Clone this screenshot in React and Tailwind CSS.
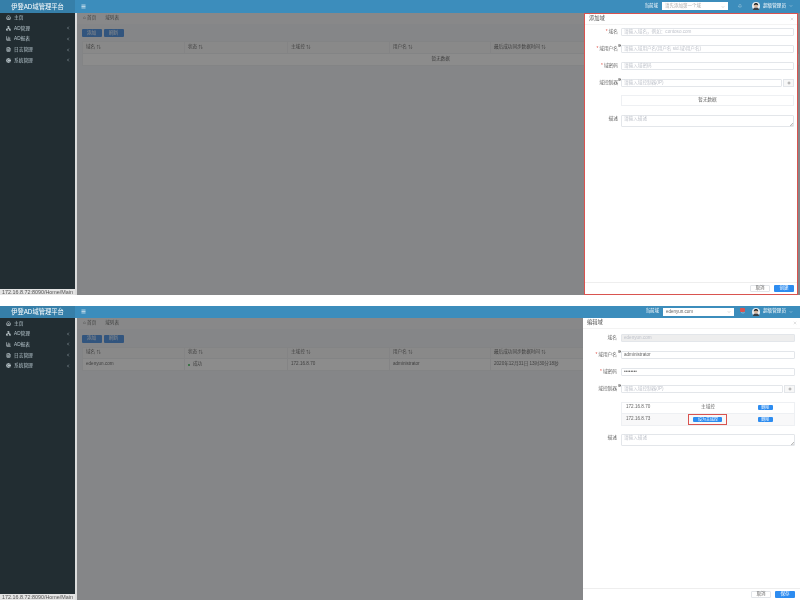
import { Home, Network, BarChart3, FileText, Cog, ChevronLeft, ChevronDown, Bell, Menu, HelpCircle, X, Plus } from "lucide-react";

const menu = [
  { label: "主页", icon: Home },
  { label: "AD管理", icon: Network, arrow: true },
  { label: "AD报表", icon: BarChart3, arrow: true },
  { label: "日志管理", icon: FileText, arrow: true },
  { label: "系统管理", icon: Cog, arrow: true },
];

const columns = ["域名", "状态", "主域控", "用户名", "最后成功同步数据时间"];

const Avatar = () => (
  <svg width="8" height="8" viewBox="0 0 16 16" className="shrink-0">
    <circle cx="8" cy="8" r="8" fill="#e9edf0" />
    <path d="M2 16c0-4 3-5 6-5s6 1 6 5z" fill="#3a3f45" />
    <circle cx="8" cy="7" r="4" fill="#d9b59a" />
    <path d="M3.500 7C3.500 3 6 2 8 2s4.500 1 4.500 5C11 5 5 5 3.500 7z" fill="#2b2b2b" />
  </svg>
);

const Sidebar = ({ url }) => (
  <div className="w-[75px] shrink-0 bg-[#222d32] flex flex-col justify-between">
    <div className="flex flex-col">
      {menu.map((m) => (
        <div key={m.label} className="h-[10.6px] flex items-center pl-[6px] pr-[5px] text-[#b8c7ce] text-[4.7px]">
          <m.icon size={5} className="mr-[3px] text-[#c5d0d6]" strokeWidth={3} />
          <span className="flex-1">{m.label}</span>
          {m.arrow && <ChevronLeft size={4} strokeWidth={3} />}
        </div>
      ))}
    </div>
    <div className="h-[6px] bg-[#e4e4e4] text-[#555] text-[5.4px] leading-[6px] pl-[2px] whitespace-nowrap overflow-hidden">{url}</div>
  </div>
);

const Topbar = ({ domain, badge }) => (
  <div className="h-[12.5px] shrink-0 flex bg-[#3c8dbc] text-white">
    <div className="w-[75px] shrink-0 bg-[#367fa9] flex items-center justify-center text-[6.3px]">伊登AD域管理平台</div>
    <div className="flex-1 flex items-center pl-[6px] pr-[7px]">
      <Menu size={5} strokeWidth={3} />
      <div className="flex-1" />
      <span className="text-[4.5px] mr-[4px]">当前域</span>
      <div className={`h-[8px] bg-white flex items-center justify-between pl-[3px] pr-[3px] pt-[1px] text-[4.5px] ${badge ? "w-[71px] text-[#666]" : "w-[66px] text-[#aaa]"}`}>
        {domain}
        <ChevronDown size={4} className="text-[#999]" />
      </div>
      <div className={`relative flex justify-center ${badge ? "w-[18px]" : "w-[24px]"}`}>
        <Bell size={4} className="text-[#cfe3f0]" />
        {badge && <span className="absolute left-[6px] -top-[2px] w-[5px] h-[4px] bg-[#d9534f] rounded-[1px]" />}
      </div>
      <Avatar />
      <span className="text-[4.6px] ml-[3px] whitespace-nowrap">超级管理员</span>
      <ChevronDown size={4} className="ml-[3px]" />
    </div>
  </div>
);

const Content = ({ rows, topGap }) => (
  <div className="flex-1 min-w-0 bg-[#f2f4f7] flex flex-col">
    <div className="h-[11px] bg-[#f7f8f9] flex items-center gap-[9px] pl-[6px] text-[4.6px] text-[#777]">
      <span>⌂ 首页</span>
      <span>域列表</span>
    </div>
    <div className="pl-[4.5px]" style={{ paddingTop: topGap }}>
      <div className="flex gap-[2px] mb-[4px]">
        <div className="w-[20px] h-[8px] bg-[#5b9be6] text-white text-[4.6px] flex items-center justify-center rounded-[1px]">添加</div>
        <div className="w-[20px] h-[8px] bg-[#5b9be6] text-white text-[4.6px] flex items-center justify-center rounded-[1px]">刷新</div>
      </div>
      <div className="border border-[#eef0f3] bg-white text-[#777] text-[4.6px]">
        <div className="grid grid-cols-[102px_103px_102px_101px_1fr] h-[11.5px] bg-[#fafafa] border-b border-[#eef0f3]">
          {columns.map((c) => (
            <div key={c} className="flex items-center pl-[3.5px] border-r border-[#f0f1f3] whitespace-nowrap">{c} ⇅</div>
          ))}
        </div>
        {rows ? (
          <div className="grid grid-cols-[102px_103px_102px_101px_1fr] h-[11px]">
            <div className="flex items-center pl-[3.5px] border-r border-[#f0f1f3]">edenyun.com</div>
            <div className="flex items-center pl-[3.5px] border-r border-[#f0f1f3]">
              <span className="w-[2px] h-[2px] rounded-full bg-[#3fc25a] mr-[3px]" />成功
            </div>
            <div className="flex items-center pl-[3.5px] border-r border-[#f0f1f3]">172.16.8.70</div>
            <div className="flex items-center pl-[3.5px] border-r border-[#f0f1f3]">administrator</div>
            <div className="flex items-center pl-[3.5px] whitespace-nowrap">2020年12月31日 13时30分18秒</div>
          </div>
        ) : (
          <div className="h-[11px] flex items-center justify-center">暂无数据</div>
        )}
      </div>
    </div>
  </div>
);

const Field = ({ label, required, help, placeholder, value, disabled, addon, tall, wide }) => (
  <div className={`flex ${tall ? "items-start" : "items-center"}`}>
    <div className={`${wide ? "w-[38px] pr-[4px]" : "w-[36px] pr-[3px]"} shrink-0 text-right text-[4.7px] text-[#666] relative whitespace-nowrap`}>
      {required && <span className="text-[#e2574c] mr-[1px]">*</span>}
      {label}
      {help && <HelpCircle size={3} strokeWidth={4} className="absolute right-0 -top-[1px] text-[#555]" />}
    </div>
    <div className={`relative flex-1 border border-[#e3e6ea] rounded-[1px] flex px-[2px] text-[4.6px] ${tall ? "h-[12px] items-start" : "h-[8px] items-center pt-[1px]"} ${disabled ? "bg-[#eeeeee]" : "bg-white"} ${value && !disabled ? "text-[#666]" : "text-[#c0c4cc]"}`}>
      {value || placeholder}
      {tall && (
        <svg width="3" height="3" viewBox="0 0 6 6" className="absolute right-0 bottom-0 text-[#777]">
          <path d="M0 6 6 0M3 6l3-3" stroke="currentColor" strokeWidth="1" />
        </svg>
      )}
    </div>
    {addon && (
      <div className="ml-[1px] w-[11px] h-[8px] border border-[#e3e6ea] bg-[#f7f7f7] flex items-center justify-center text-[#666]">
        <Plus size={4} strokeWidth={3} />
      </div>
    )}
  </div>
);

const Footer = ({ label, pad }) => (
  <div className={`h-[12px] border-t border-[#eeeeee] flex items-center justify-end gap-[4px] ${pad}`}>
    <div className="w-[20px] h-[7.5px] border border-[#e2e5e9] rounded-[1px] text-[#666] text-[4.6px] flex items-center justify-center">取消</div>
    <div className="w-[20px] h-[7.5px] bg-[#2d8cf0] rounded-[1px] text-white text-[4.6px] flex items-center justify-center">{label}</div>
  </div>
);

const Title = ({ text }) => (
  <div className="h-[11px] flex items-center justify-between pl-[4px] pr-[3px] border-b border-[#f3f3f3] text-[5.3px] text-[#555]">
    {text}
    <X size={4} className="text-[#aaa]" />
  </div>
);

const AddDrawer = () => (
  <div className="absolute top-0 bottom-0 right-[2px] w-[214px] bg-white border-[1.5px] border-[#d9534f] flex flex-col">
    <Title text="添加域" />
    <div className="flex-1 flex flex-col gap-[9px] pt-[3.5px] pr-[3px]">
      <Field required label="域名" placeholder="请输入域名，例如：contoso.com" />
      <Field required help label="域用户名" placeholder="请输入域用户名(用户名 sid.域\用户名)" />
      <Field required label="域密码" placeholder="请输入域密码" />
      <Field help addon label="域控制器" placeholder="请输入域控制器(IP)" />
      <div className="ml-[36px] h-[11px] -mt-[1px] border border-[#eef0f3] flex items-center justify-center text-[4.6px] text-[#666]">暂无数据</div>
      <Field tall label="描述" placeholder="请输入描述" />
    </div>
    <Footer label="创建" pad="pr-[3px]" />
  </div>
);

const EditDrawer = () => (
  <div className="absolute top-0 bottom-0 right-0 w-[217px] bg-white flex flex-col">
    <Title text="编辑域" />
    <div className="flex-1 flex flex-col gap-[9px] pt-[4.5px] pr-[5px]">
      <Field wide disabled label="域名" value="edenyun.com" />
      <Field wide required help label="域用户名" value="administrator" />
      <Field wide required label="域密码" value="••••••••" />
      <Field wide help addon label="域控制器" placeholder="请输入域控制器(IP)" />
      <div className="ml-[38px] -mb-[1px] h-[24px] border border-[#eef0f3] text-[4.6px] text-[#666]">
        <div className="grid grid-cols-3 h-[11px] items-center border-b border-[#eef0f3]">
          <span className="pl-[4px]">172.16.8.70</span>
          <span className="text-center">主域控</span>
          <div className="flex justify-center">
            <span className="w-[15px] h-[5px] bg-[#2d8cf0] text-white rounded-[1px] text-[4px] leading-[5px] text-center">删除</span>
          </div>
        </div>
        <div className="grid grid-cols-3 h-[11px] items-center bg-[#f8f8f9]">
          <span className="pl-[4px]">172.16.8.73</span>
          <div className="flex justify-center">
            <span className="w-[39px] h-[11px] border border-[#d9534f] flex items-center justify-center">
              <span className="w-[29px] h-[5px] bg-[#2d8cf0] text-white rounded-[1px] text-[4px] leading-[5px] text-center whitespace-nowrap">设为主域控</span>
            </span>
          </div>
          <div className="flex justify-center">
            <span className="w-[15px] h-[5px] bg-[#2d8cf0] text-white rounded-[1px] text-[4px] leading-[5px] text-center">删除</span>
          </div>
        </div>
      </div>
      <Field wide tall label="描述" placeholder="请输入描述" />
    </div>
    <Footer label="保存" pad="pr-[5px]" />
  </div>
);

const Shot = ({ height, domain, badge, rows, topGap, drawer }) => (
  <div className="w-[800px] flex flex-col overflow-hidden" style={{ height }}>
    <Topbar domain={domain} badge={badge} />
    <div className="flex-1 min-h-0 flex">
      <Sidebar url="172.16.8.72:8090/Home/Main" />
      <div className="w-[2px] shrink-0 bg-[#dcdcdc]" />
      <div className="flex-1 min-w-0 relative flex bg-white">
        <Content rows={rows} topGap={topGap} />
        <div className="absolute inset-0 bg-black/45" />
        {drawer}
      </div>
    </div>
  </div>
);

export default function App() {
  return (
    <div className="w-[800px] h-[600px] overflow-hidden bg-white flex flex-col justify-between blur-[0.5px]" style={{ fontFamily: '"Liberation Sans", "Noto Sans CJK SC", sans-serif' }}>
      <Shot height={295} domain="请先添加第一个域" topGap={5.5} drawer={<AddDrawer />} />
      <Shot height={294.5} domain="edenyun.com" badge rows topGap={5.5} drawer={<EditDrawer />} />
    </div>
  );
}
